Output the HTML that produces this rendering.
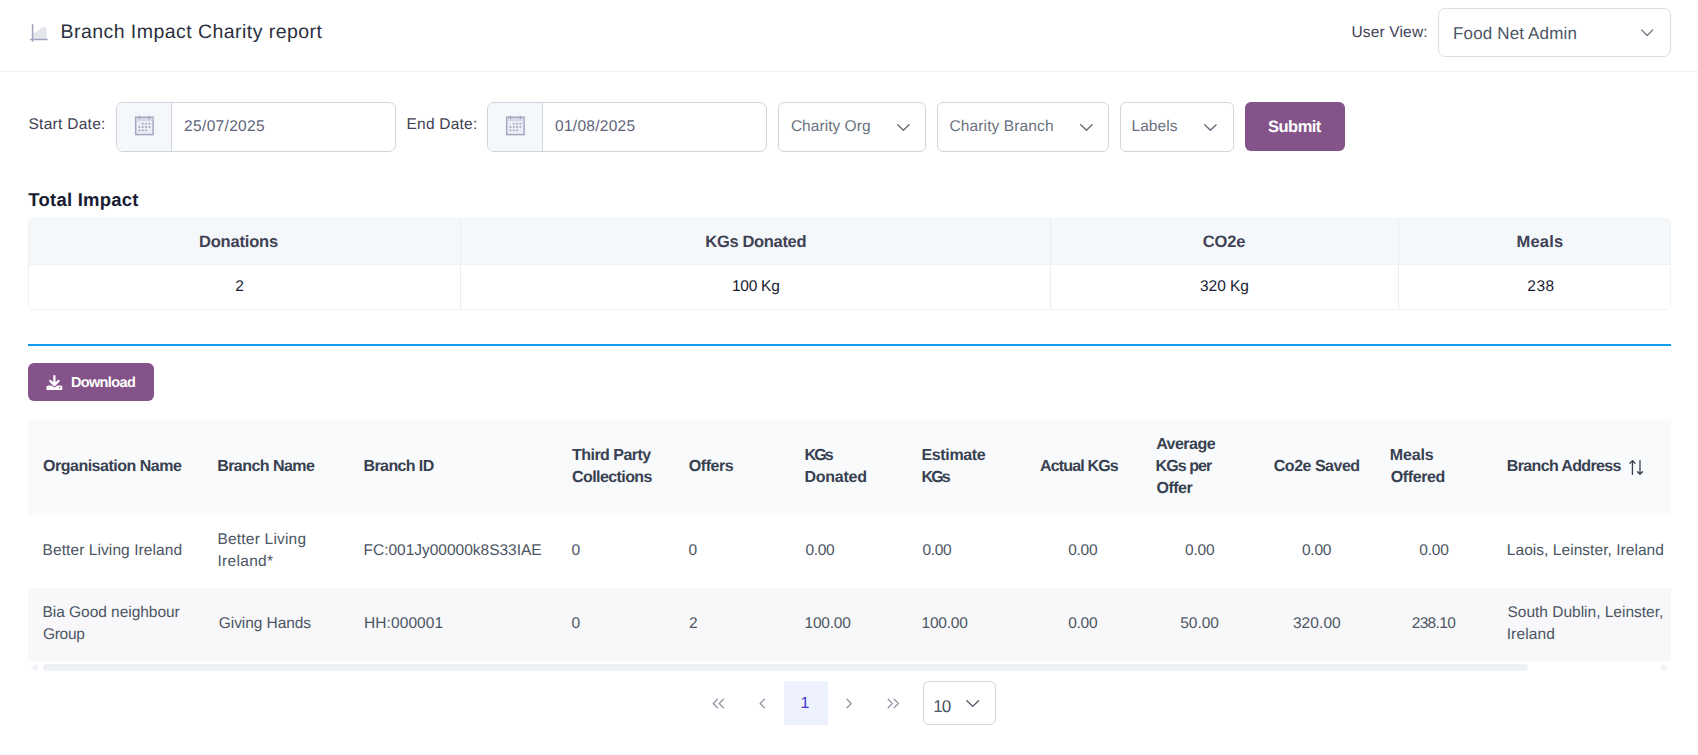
<!DOCTYPE html>
<html>
<head>
<meta charset="utf-8">
<title>Branch Impact Charity report</title>
<style>
*{box-sizing:border-box;margin:0;padding:0}
html,body{width:1698px;height:755px;overflow:hidden;background:#fff}
body{font-family:"Liberation Sans",sans-serif;color:#3f4254;position:relative;text-rendering:geometricPrecision}
.abs{position:absolute}
.x{position:absolute;white-space:nowrap;line-height:20px;font-family:"Liberation Sans",sans-serif}
#hdr{left:0;top:0;width:1698px;height:72px;border-bottom:1px solid #eff2f5}
.sel{border:1px solid #d1d5db;border-radius:6px;background:#fff}
.dgroup{border:1px solid #d0d2de;border-radius:7px;height:50px;overflow:hidden;background:#fff}
.dgroup .addon{position:absolute;left:0;top:0;width:55px;height:48px;background:#f5f8fa;border-right:1px solid #d0d2de}
#submit{left:1245px;top:102px;width:100px;height:49px;border-radius:6px;background:#845389}
#tit{left:28px;top:218px;width:1643px;height:92px;border:1px solid #eff2f5;border-radius:6px;overflow:hidden;background:#fff}
#tit .hb{position:absolute;left:0;top:0;width:1641px;height:46px;background:#f5f8fa;border-bottom:1px solid #eff2f5}
#tit .v{position:absolute;top:0;width:1px;height:90px;background:#e9ecf1}
#hr{left:28px;top:344px;width:1643px;height:2px;background:#109cf1}
#dl{left:28px;top:363px;width:126px;height:38px;border-radius:6px;background:#845389}
#dt{left:28px;top:420px;width:1643px;height:241px;background:#fff;overflow:hidden}
#dt .hd{position:absolute;left:0;top:0;width:1643px;height:95px;background:#f9fafb}
#dt .r2{position:absolute;left:0;top:168px;width:1643px;height:73px;background:#f8f8fa}
#sb{left:43px;top:664px;width:1485px;height:7px;border-radius:4px;background:#eef1f5}
#pg1{left:784px;top:681px;width:44px;height:44px;background:#eef2ff}
#pgsel{left:923px;top:681px;width:73px;height:44px;border:1px solid #d1d5db;border-radius:6px;background:#fff}
svg{position:absolute;overflow:visible}
</style>
</head>
<body>

<div class="abs" id="hdr"></div>
<!-- title chart icon -->
<svg style="left:0;top:0" width="60" height="60" viewBox="0 0 60 60">
  <path d="M33.4 32.8 C35.8 32.8 37.6 31 39.6 29.2 C41.6 27.4 43.6 26.6 46.6 27.6 L46.6 38.7 L33.4 38.7 Z" fill="#e4e6ec"/>
  <path d="M32.6 24.7 V41.1 M30.8 39.5 H47.1" stroke="#a1a5c1" stroke-width="1.6" stroke-linecap="round" fill="none"/>
</svg>
<div class="abs sel" style="left:1438px;top:8px;width:233px;height:49px;border-color:#dcdde9;border-radius:7px"></div>
<svg style="left:1640px;top:28px" width="14" height="9" viewBox="0 0 14 9"><path d="M1.6 1.9 L7.2 7.5 L12.8 1.9" stroke="#6b7280" stroke-width="1.3" fill="none" stroke-linecap="round" stroke-linejoin="round"/></svg>

<!-- date groups -->
<div class="abs dgroup" style="left:116px;top:102px;width:280px"><div class="addon"></div></div>
<div class="abs dgroup" style="left:487px;top:102px;width:280px"><div class="addon"></div></div>
<svg style="left:134px;top:115px" width="21" height="21" viewBox="0 0 21 21">
  <rect x="1.7" y="2.2" width="17.4" height="17.4" fill="#eceef5" stroke="#a3a5bf" stroke-width="1.45"/>
  <rect x="2.4" y="2.9" width="16" height="3.1" fill="#d6d8e5"/>
  <path d="M5.5 0.8 V4 M15.3 0.8 V4" stroke="#a3a5bf" stroke-width="1.45"/>
  <g fill="#a3a5bf">
   <rect x="7.9" y="7.9" width="1.7" height="1.7"/><rect x="11.2" y="7.9" width="1.7" height="1.7"/><rect x="14.5" y="7.9" width="1.7" height="1.7"/>
   <rect x="4.6" y="11.2" width="1.7" height="1.7"/><rect x="7.9" y="11.2" width="1.7" height="1.7"/><rect x="11.2" y="11.2" width="1.7" height="1.7"/><rect x="14.5" y="11.2" width="1.7" height="1.7"/>
   <rect x="4.6" y="14.5" width="1.7" height="1.7"/><rect x="7.9" y="14.5" width="1.7" height="1.7"/><rect x="11.2" y="14.5" width="1.7" height="1.7"/>
  </g>
</svg>
<svg style="left:505px;top:115px" width="21" height="21" viewBox="0 0 21 21">
  <rect x="1.7" y="2.2" width="17.4" height="17.4" fill="#eceef5" stroke="#a3a5bf" stroke-width="1.45"/>
  <rect x="2.4" y="2.9" width="16" height="3.1" fill="#d6d8e5"/>
  <path d="M5.5 0.8 V4 M15.3 0.8 V4" stroke="#a3a5bf" stroke-width="1.45"/>
  <g fill="#a3a5bf">
   <rect x="7.9" y="7.9" width="1.7" height="1.7"/><rect x="11.2" y="7.9" width="1.7" height="1.7"/><rect x="14.5" y="7.9" width="1.7" height="1.7"/>
   <rect x="4.6" y="11.2" width="1.7" height="1.7"/><rect x="7.9" y="11.2" width="1.7" height="1.7"/><rect x="11.2" y="11.2" width="1.7" height="1.7"/><rect x="14.5" y="11.2" width="1.7" height="1.7"/>
   <rect x="4.6" y="14.5" width="1.7" height="1.7"/><rect x="7.9" y="14.5" width="1.7" height="1.7"/><rect x="11.2" y="14.5" width="1.7" height="1.7"/>
  </g>
</svg>

<!-- dropdowns -->
<div class="abs sel" style="left:778px;top:102px;width:148px;height:50px"></div>
<div class="abs sel" style="left:937px;top:102px;width:172px;height:50px"></div>
<div class="abs sel" style="left:1120px;top:102px;width:114px;height:50px"></div>
<svg style="left:896px;top:123px" width="15" height="9" viewBox="0 0 15 9"><path d="M1.7 1.7 L7.4 7.3 L13.1 1.7" stroke="#5f6875" stroke-width="1.3" fill="none" stroke-linecap="round" stroke-linejoin="round"/></svg>
<svg style="left:1079px;top:123px" width="15" height="9" viewBox="0 0 15 9"><path d="M1.7 1.7 L7.4 7.3 L13.1 1.7" stroke="#5f6875" stroke-width="1.3" fill="none" stroke-linecap="round" stroke-linejoin="round"/></svg>
<svg style="left:1203px;top:123px" width="15" height="9" viewBox="0 0 15 9"><path d="M1.7 1.7 L7.4 7.3 L13.1 1.7" stroke="#5f6875" stroke-width="1.3" fill="none" stroke-linecap="round" stroke-linejoin="round"/></svg>
<div class="abs" id="submit"></div>

<!-- total impact -->
<div class="abs" id="tit">
  <div class="hb"></div>
  <div class="v" style="left:431px"></div>
  <div class="v" style="left:1021px"></div>
  <div class="v" style="left:1369px"></div>
</div>
<div class="abs" id="hr"></div>
<div class="abs" id="dl"></div>
<svg style="left:46px;top:374px" width="17" height="17" viewBox="0 0 17 17">
  <rect x="0.5" y="11.4" width="15.8" height="4.6" rx="1.6" fill="#fff"/>
  <path d="M8.4 2 V10.6 M3.9 6.9 L8.4 11.4 L12.9 6.9" stroke="#845389" stroke-width="3.9" fill="none" stroke-linecap="round" stroke-linejoin="round"/>
  <path d="M8.4 2 V10.6 M4.2 6.9 L8.4 11.1 L12.6 6.9" stroke="#fff" stroke-width="2.2" fill="none" stroke-linecap="round" stroke-linejoin="round"/>
  <rect x="0.5" y="13.6" width="15.8" height="2.4" rx="1.2" fill="#fff"/>
  <circle cx="13.8" cy="13.7" r="0.75" fill="#845389"/>
</svg>

<!-- data table -->
<div class="abs" id="dt"><div class="hd"></div><div class="r2"></div></div>
<svg style="left:1628px;top:458px" width="18" height="18" viewBox="0 0 18 18">
  <path d="M4.45 16.3 V2.6 M1.95 5.2 L4.45 2.6 L6.95 5.2 M12 2.6 V16.3 M9.5 13.7 L12 16.3 L14.5 13.7" stroke="#374151" stroke-width="1.3" fill="none" stroke-linecap="round" stroke-linejoin="round"/>
</svg>

<!-- scrollbar -->
<svg style="left:30px;top:663px" width="8" height="9" viewBox="0 0 8 9"><path d="M7.6 0.6 V8.4 L1 4.5 Z" fill="#eef1f5"/></svg>
<svg style="left:1661px;top:663px" width="8" height="9" viewBox="0 0 8 9"><path d="M0.4 0.6 V8.4 L7 4.5 Z" fill="#eef1f5"/></svg>
<div class="abs" id="sb"></div>

<!-- paginator -->
<svg style="left:712px;top:698px" width="13" height="11" viewBox="0 0 13 11"><path d="M5.4 1.3 L1.2 5.5 L5.4 9.7 M11.4 1.3 L7.2 5.5 L11.4 9.7" stroke="#9097a5" stroke-width="1.3" fill="none" stroke-linecap="round" stroke-linejoin="round"/></svg>
<svg style="left:758px;top:698px" width="8" height="11" viewBox="0 0 8 11"><path d="M6.4 1.3 L2.2 5.5 L6.4 9.7" stroke="#9097a5" stroke-width="1.3" fill="none" stroke-linecap="round" stroke-linejoin="round"/></svg>
<div class="abs" id="pg1"></div>
<svg style="left:845px;top:698px" width="8" height="11" viewBox="0 0 8 11"><path d="M2 1.3 L6.2 5.5 L2 9.7" stroke="#9097a5" stroke-width="1.3" fill="none" stroke-linecap="round" stroke-linejoin="round"/></svg>
<svg style="left:887px;top:698px" width="13" height="11" viewBox="0 0 13 11"><path d="M1.2 1.3 L5.4 5.5 L1.2 9.7 M7.2 1.3 L11.4 5.5 L7.2 9.7" stroke="#9097a5" stroke-width="1.3" fill="none" stroke-linecap="round" stroke-linejoin="round"/></svg>
<div class="abs" id="pgsel"></div>
<svg style="left:965px;top:699px" width="15" height="9" viewBox="0 0 15 9"><path d="M1.9 1.7 L7.7 7.4 L13.5 1.7" stroke="#4b5563" stroke-width="1.3" fill="none" stroke-linecap="round" stroke-linejoin="round"/></svg>

<div class="x" style="left:60.5px;top:22px;font-size:19.5px;color:#2b2f3e;letter-spacing:0.45px">Branch Impact Charity report</div>
<div class="x" style="left:1351.4px;top:23px;font-size:15.5px;color:#3f4254;letter-spacing:0.17px">User View:</div>
<div class="x" style="left:1453.0px;top:24px;font-size:17px;color:#4b5563;letter-spacing:0.15px">Food Net Admin</div>
<div class="x" style="left:28.5px;top:115px;font-size:15.5px;color:#3f4254;letter-spacing:0.28px">Start Date:</div>
<div class="x" style="left:406.5px;top:115px;font-size:15.5px;color:#3f4254;letter-spacing:0.23px">End Date:</div>
<div class="x" style="left:184.1px;top:117px;font-size:15.5px;color:#5e6278;letter-spacing:0.33px">25/07/2025</div>
<div class="x" style="left:555.0px;top:117px;font-size:15.5px;color:#5e6278;letter-spacing:0.28px">01/08/2025</div>
<div class="x" style="left:790.9px;top:117px;font-size:15.5px;color:#6b7280;letter-spacing:0.04px">Charity Org</div>
<div class="x" style="left:949.5px;top:117px;font-size:15.5px;color:#6b7280;letter-spacing:0.12px">Charity Branch</div>
<div class="x" style="left:1131.5px;top:117px;font-size:15.5px;color:#6b7280;letter-spacing:0.05px">Labels</div>
<div class="x" style="left:1268.0px;top:117px;font-size:16.5px;color:#ffffff;font-weight:bold;letter-spacing:-0.51px">Submit</div>
<div class="x" style="left:28.3px;top:190px;font-size:18.5px;color:#181c32;font-weight:bold;letter-spacing:0.23px">Total Impact</div>
<div class="x" style="left:199.0px;top:232px;font-size:16.5px;color:#3f4254;font-weight:bold;letter-spacing:-0.2px">Donations</div>
<div class="x" style="left:705.3px;top:232px;font-size:16.5px;color:#3f4254;font-weight:bold;letter-spacing:-0.33px">KGs Donated</div>
<div class="x" style="left:1202.7px;top:232px;font-size:16.5px;color:#3f4254;font-weight:bold;letter-spacing:-0.14px">CO2e</div>
<div class="x" style="left:1516.6px;top:232px;font-size:16.5px;color:#3f4254;font-weight:bold;letter-spacing:0.15px">Meals</div>
<div class="x" style="left:235.3px;top:277px;font-size:15.5px;color:#181c32">2</div>
<div class="x" style="left:731.9px;top:277px;font-size:15.5px;color:#181c32;letter-spacing:-0.24px">100 Kg</div>
<div class="x" style="left:1200.0px;top:277px;font-size:15.5px;color:#181c32;letter-spacing:-0.04px">320 Kg</div>
<div class="x" style="left:1527.3px;top:277px;font-size:15.5px;color:#181c32;letter-spacing:0.52px">238</div>
<div class="x" style="left:70.9px;top:373px;font-size:14.5px;color:#ffffff;font-weight:bold;letter-spacing:-0.63px">Download</div>
<div class="x" style="left:43.0px;top:457px;font-size:16px;color:#374151;font-weight:bold;letter-spacing:-0.49px">Organisation Name</div>
<div class="x" style="left:217.2px;top:457px;font-size:16px;color:#374151;font-weight:bold;letter-spacing:-0.55px">Branch Name</div>
<div class="x" style="left:363.5px;top:457px;font-size:16px;color:#374151;font-weight:bold;letter-spacing:-0.6px">Branch ID</div>
<div class="x" style="left:572.0px;top:446px;font-size:16px;color:#374151;font-weight:bold;letter-spacing:-0.53px">Third Party</div>
<div class="x" style="left:572.0px;top:468px;font-size:16px;color:#374151;font-weight:bold;letter-spacing:-0.58px">Collections</div>
<div class="x" style="left:688.8px;top:457px;font-size:16px;color:#374151;font-weight:bold;letter-spacing:-0.45px">Offers</div>
<div class="x" style="left:804.5px;top:446px;font-size:16px;color:#374151;font-weight:bold;letter-spacing:-1.88px">KGs</div>
<div class="x" style="left:804.5px;top:468px;font-size:16px;color:#374151;font-weight:bold;letter-spacing:-0.25px">Donated</div>
<div class="x" style="left:921.5px;top:446px;font-size:16px;color:#374151;font-weight:bold;letter-spacing:-0.36px">Estimate</div>
<div class="x" style="left:921.5px;top:468px;font-size:16px;color:#374151;font-weight:bold;letter-spacing:-1.88px">KGs</div>
<div class="x" style="left:1040.0px;top:457px;font-size:16px;color:#374151;font-weight:bold;letter-spacing:-0.84px">Actual KGs</div>
<div class="x" style="left:1156.2px;top:435px;font-size:16px;color:#374151;font-weight:bold;letter-spacing:-0.53px">Average</div>
<div class="x" style="left:1155.5px;top:457px;font-size:16px;color:#374151;font-weight:bold;letter-spacing:-0.92px">KGs per</div>
<div class="x" style="left:1156.5px;top:479px;font-size:16px;color:#374151;font-weight:bold;letter-spacing:-0.5px">Offer</div>
<div class="x" style="left:1273.8px;top:457px;font-size:16px;color:#374151;font-weight:bold;letter-spacing:-0.49px">Co2e Saved</div>
<div class="x" style="left:1389.8px;top:446px;font-size:16px;color:#374151;font-weight:bold;letter-spacing:-0.14px">Meals</div>
<div class="x" style="left:1390.8px;top:468px;font-size:16px;color:#374151;font-weight:bold;letter-spacing:-0.4px">Offered</div>
<div class="x" style="left:1506.8px;top:457px;font-size:16px;color:#374151;font-weight:bold;letter-spacing:-0.65px">Branch Address</div>
<div class="x" style="left:42.5px;top:541px;font-size:15.5px;color:#4b5563;letter-spacing:0.09px">Better Living Ireland</div>
<div class="x" style="left:217.5px;top:530px;font-size:15.5px;color:#4b5563;letter-spacing:0.2px">Better Living</div>
<div class="x" style="left:217.5px;top:552px;font-size:15.5px;color:#4b5563;letter-spacing:0.3px">Ireland*</div>
<div class="x" style="left:363.5px;top:541px;font-size:15.5px;color:#4b5563;letter-spacing:-0.01px">FC:001Jy00000k8S33IAE</div>
<div class="x" style="left:571.5px;top:541px;font-size:15.5px;color:#4b5563">0</div>
<div class="x" style="left:688.5px;top:541px;font-size:15.5px;color:#4b5563">0</div>
<div class="x" style="left:805.5px;top:541px;font-size:15.5px;color:#4b5563;letter-spacing:-0.35px">0.00</div>
<div class="x" style="left:922.5px;top:541px;font-size:15.5px;color:#4b5563;letter-spacing:-0.35px">0.00</div>
<div class="x" style="left:1068.2px;top:541px;font-size:15.5px;color:#4b5563;letter-spacing:-0.27px">0.00</div>
<div class="x" style="left:1185.0px;top:541px;font-size:15.5px;color:#4b5563;letter-spacing:-0.18px">0.00</div>
<div class="x" style="left:1302.0px;top:541px;font-size:15.5px;color:#4b5563;letter-spacing:-0.27px">0.00</div>
<div class="x" style="left:1419.2px;top:541px;font-size:15.5px;color:#4b5563;letter-spacing:-0.18px">0.00</div>
<div class="x" style="left:1506.8px;top:541px;font-size:15.5px;color:#4b5563;letter-spacing:0.05px">Laois, Leinster, Ireland</div>
<div class="x" style="left:42.5px;top:603px;font-size:15.5px;color:#4b5563;letter-spacing:-0.04px">Bia Good neighbour</div>
<div class="x" style="left:43.0px;top:625px;font-size:15.5px;color:#4b5563;letter-spacing:-0.31px">Group</div>
<div class="x" style="left:218.8px;top:614px;font-size:15.5px;color:#4b5563;letter-spacing:-0.07px">Giving Hands</div>
<div class="x" style="left:364.0px;top:614px;font-size:15.5px;color:#4b5563;letter-spacing:0.09px">HH:000001</div>
<div class="x" style="left:571.5px;top:614px;font-size:15.5px;color:#4b5563">0</div>
<div class="x" style="left:689.0px;top:614px;font-size:15.5px;color:#4b5563">2</div>
<div class="x" style="left:804.5px;top:614px;font-size:15.5px;color:#4b5563;letter-spacing:-0.21px">100.00</div>
<div class="x" style="left:921.5px;top:614px;font-size:15.5px;color:#4b5563;letter-spacing:-0.21px">100.00</div>
<div class="x" style="left:1068.2px;top:614px;font-size:15.5px;color:#4b5563;letter-spacing:-0.27px">0.00</div>
<div class="x" style="left:1180.2px;top:614px;font-size:15.5px;color:#4b5563;letter-spacing:-0.02px">50.00</div>
<div class="x" style="left:1292.9px;top:614px;font-size:15.5px;color:#4b5563;letter-spacing:0.08px">320.00</div>
<div class="x" style="left:1411.7px;top:614px;font-size:15.5px;color:#4b5563;letter-spacing:-0.66px">238.10</div>
<div class="x" style="left:1507.5px;top:603px;font-size:15.5px;color:#4b5563;letter-spacing:-0.01px">South Dublin, Leinster,</div>
<div class="x" style="left:1506.7px;top:625px;font-size:15.5px;color:#4b5563;letter-spacing:0.12px">Ireland</div>
<div class="x" style="left:800.4px;top:694px;font-size:16px;color:#4338ca">1</div>
<div class="x" style="left:933.2px;top:697px;font-size:17px;color:#4b5563">1</div>
<div class="x" style="left:941.8px;top:697px;font-size:17px;color:#4b5563">0</div>

</body>
</html>
